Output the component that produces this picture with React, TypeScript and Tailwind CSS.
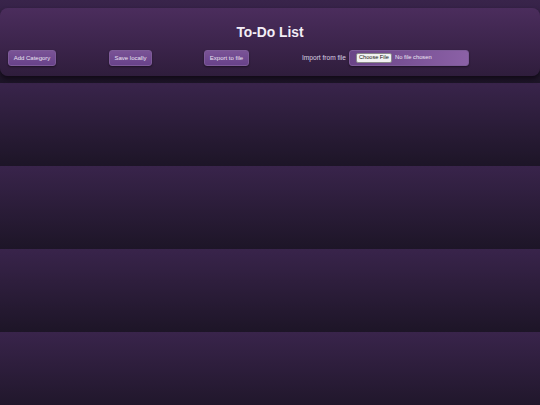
import React from "react";

const btn =
  "h-[16px] rounded-[3px] border border-[#7e5b99] bg-[linear-gradient(to_bottom,#7a5396,#68428a)] px-0 text-[6px] leading-none whitespace-nowrap text-[#ece3f3] shadow-[0_1px_2px_rgba(0,0,0,0.45)] flex items-center justify-center";

export default function App() {
  return (
    <div
      className="min-h-[405px] w-full bg-[linear-gradient(to_bottom,#39244b,#1d1527)] bg-[length:100%_83px] bg-repeat pt-[8px]"
      style={{ fontFamily: '"Liberation Sans", Arial, sans-serif' }}
    >
      <header className="h-[68px] rounded-[8px] bg-[linear-gradient(to_bottom,#4b2d5d,#2f1d3c)] shadow-[0_3px_4px_rgba(15,8,20,0.85)] flex flex-col">
        <h1 className="pt-[17px] text-center text-[13.8px] font-bold leading-[16px] text-[#f3eef6]">
          To-Do List
        </h1>
        <div className="mt-[9px] flex items-center pl-[8px]">
          <button className={`${btn} w-[48px]`}>Add Category</button>
          <button className={`${btn} ml-[53px] w-[43px]`}>Save locally</button>
          <button className={`${btn} ml-[52px] w-[45px]`}>Export to file</button>
          <div className="ml-[53px] flex items-center gap-[3px]">
            <span className="whitespace-nowrap text-[6.6px] text-[#d9cfe2]">Import from file</span>
            <label className="flex h-[16px] w-[120px] items-center gap-[3px] rounded-[3px] border border-[#7e5b99] bg-[linear-gradient(to_right,#6a4487,#8b61a6)] pl-[6px] shadow-[0_1px_2px_rgba(0,0,0,0.45)]">
              <span className="flex h-[10px] w-[36px] items-center justify-center whitespace-nowrap rounded-[2px] border border-[#8a8a8a] bg-[#f2f2f2] text-[5.6px] leading-none text-[#111]">
                Choose File
              </span>
              <span className="whitespace-nowrap text-[5.8px] leading-none text-[#eee6f3]">No file chosen</span>
            </label>
          </div>
        </div>
      </header>
    </div>
  );
}
